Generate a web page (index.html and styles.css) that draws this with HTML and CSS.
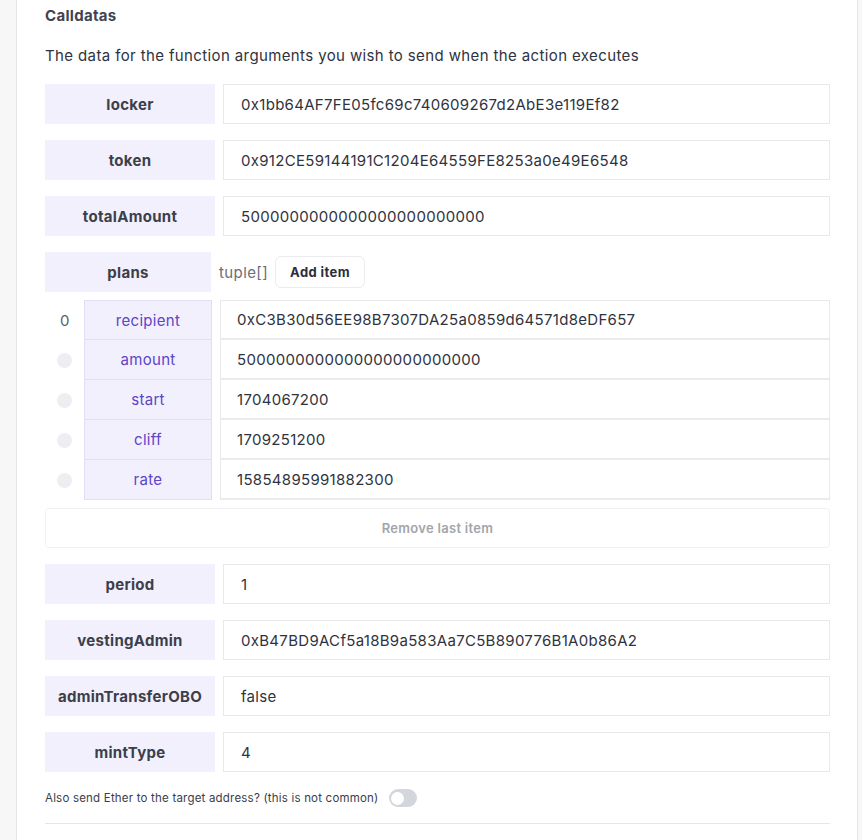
FILE: index.html
```html
<!DOCTYPE html>
<html>
<head>
<meta charset="utf-8">
<link rel="stylesheet" href="styles.css">
</head>
<body>
<div class="page">
  <div class="card">
    <h3 class="title">Calldatas</h3>
    <p class="desc">The data for the function arguments you wish to send when the action executes</p>

    <div class="row"><div class="label">locker</div><div class="input">0x1bb64AF7FE05fc69c740609267d2AbE3e119Ef82</div></div>
    <div class="row"><div class="label">token</div><div class="input">0x912CE59144191C1204E64559FE8253a0e49E6548</div></div>
    <div class="row"><div class="label">totalAmount</div><div class="input">5000000000000000000000000</div></div>

    <div class="row plans-row">
      <div class="label plans-label">plans</div>
      <span class="type">tuple[]</span>
      <button class="add-btn">Add item</button>
    </div>

    <div class="tuple">
      <div class="trow"><div class="idx"><span class="num">0</span></div><div class="tlabel">recipient</div><div class="tinput">0xC3B30d56EE98B7307DA25a0859d64571d8eDF657</div></div>
      <div class="trow"><div class="idx"><span class="dot"></span></div><div class="tlabel">amount</div><div class="tinput">5000000000000000000000000</div></div>
      <div class="trow"><div class="idx"><span class="dot"></span></div><div class="tlabel">start</div><div class="tinput">1704067200</div></div>
      <div class="trow"><div class="idx"><span class="dot"></span></div><div class="tlabel">cliff</div><div class="tinput">1709251200</div></div>
      <div class="trow"><div class="idx"><span class="dot"></span></div><div class="tlabel">rate</div><div class="tinput">15854895991882300</div></div>
    </div>

    <button class="remove-btn">Remove last item</button>

    <div class="row"><div class="label">period</div><div class="input">1</div></div>
    <div class="row"><div class="label">vestingAdmin</div><div class="input">0xB47BD9ACf5a18B9a583Aa7C5B890776B1A0b86A2</div></div>
    <div class="row"><div class="label">adminTransferOBO</div><div class="input">false</div></div>
    <div class="row"><div class="label">mintType</div><div class="input">4</div></div>

    <div class="ether">
      <span>Also send Ether to the target address? (this is not common)</span>
      <span class="toggle"><span class="knob"></span></span>
    </div>
    <div class="divider"></div>
  </div>
</div>
</body>
</html>
```

FILE: styles.css
```css
html, body {
  margin: 0;
  padding: 0;
  background: #f7f7f8;
  font-family: "Inter", "Liberation Sans", sans-serif;
  color: #2f3340;
}
.page {
  padding: 0 4px 0 16px;
}
.card {
  background: #fff;
  border-left: 1px solid #e6e6e9;
  border-right: 1px solid #e6e6e9;
  padding: 6px 27px 0 28px;
  height: 840px;
  box-sizing: border-box;
  letter-spacing: 0.3px;
}
.title {
  margin: 0;
  font-size: 15px;
  font-weight: 700;
  color: #3f4451;
  line-height: 20px;
}
.desc {
  margin: 20px 0 18px;
  font-size: 15px;
  line-height: 20px;
  color: #2f3340;
  letter-spacing: 0.38px;
}
.row {
  display: flex;
  gap: 8px;
  height: 40px;
  margin-bottom: 16px;
  align-items: stretch;
}
.label {
  width: 170px;
  flex: none;
  background: #f2f0fd;
  display: flex;
  align-items: center;
  justify-content: center;
  font-weight: 700;
  font-size: 15px;
  color: #3b3f4a;
}
.input {
  flex: 1;
  border: 1px solid #e9e9ec;
  display: flex;
  align-items: center;
  padding-left: 17px;
  font-size: 15px;
  color: #2f3340;
}
.plans-row {
  gap: 4px;
  align-items: center;
  margin-bottom: 8px;
}
.plans-label {
  width: 166px;
  height: 40px;
}
.type {
  margin-left: 4px;
  font-size: 15px;
  color: #6b6e78;
  letter-spacing: 0.4px;
}
.add-btn {
  margin-left: 3px;
  height: 32px;
  padding: 0 14px;
  background: #fff;
  border: 1px solid #ececef;
  border-radius: 6px;
  font-family: inherit;
  font-weight: 700;
  font-size: 13px;
  color: #2b2f3a;
  letter-spacing: 0.4px;
}
.tuple {
  display: flex;
  flex-direction: column;
}
.trow {
  display: flex;
  height: 40px;
}
.idx {
  width: 39px;
  display: flex;
  align-items: center;
  justify-content: center;
  flex: none;
}
.num {
  font-size: 15px;
  color: #5c5f68;
  margin-left: 1px;
}
.dot {
  width: 15px;
  height: 15px;
  border-radius: 50%;
  background: #eceef2;
}
.tlabel {
  width: 126px;
  flex: none;
  background: #f2f0fd;
  border: 1px solid #e2def5;
  border-top: none;
  display: flex;
  align-items: center;
  justify-content: center;
  font-size: 15px;
  color: #5b45c8;
}
.trow:first-child .tlabel {
  border-top: 1px solid #e2def5;
}
.tinput {
  flex: 1;
  margin-left: 8px;
  border: 1px solid #e9e9ec;
  border-top: none;
  border-bottom: 2px solid #ebebee;
  display: flex;
  align-items: center;
  padding-left: 16px;
  font-size: 15px;
  color: #2f3340;
}
.trow:first-child .tinput {
  border-top: 1px solid #e9e9ec;
}
.remove-btn {
  display: block;
  width: 100%;
  height: 40px;
  margin: 8px 0 16px;
  background: #fff;
  border: 1px solid #f2f2f4;
  border-radius: 4px;
  font-family: inherit;
  font-size: 13px;
  font-weight: 600;
  color: #a3a5ab;
  letter-spacing: 0.3px;
}
.ether {
  display: flex;
  align-items: center;
  gap: 10px;
  margin-top: 17px;
  font-size: 11.5px;
  letter-spacing: 0.2px;
  color: #3a3e49;
}
.toggle {
  width: 28px;
  height: 18px;
  border-radius: 9px;
  background: #d3d6dd;
  display: flex;
  align-items: center;
  padding-left: 2px;
  box-sizing: border-box;
}
.knob {
  width: 13px;
  height: 13px;
  border-radius: 50%;
  background: #fff;
}
.divider {
  margin-top: 16px;
  border-top: 1px solid #e6e6e9;
}
```
